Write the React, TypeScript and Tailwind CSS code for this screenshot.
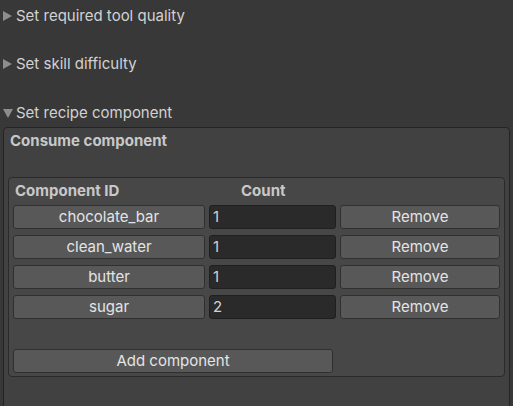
import React from 'react';

interface IComponentRow {
  id: string;
  count: number;
}

const rows: IComponentRow[] = [
  { id: 'chocolate_bar', count: 1 },
  { id: 'clean_water', count: 1 },
  { id: 'butter', count: 1 },
  { id: 'sugar', count: 2 },
];

const Foldout = ({ label, open }: { label: string; open?: boolean }) => (
  <div className="flex h-[20px] items-center">
    <div className="flex w-[16px] items-center pl-[3px]">
      {open ? (
        <svg width="10" height="9" viewBox="0 0 10 9">
          <path d="M0 0 L10 0 L5 9 Z" fill="#8c8c8c" />
        </svg>
      ) : (
        <svg width="9" height="10" viewBox="0 0 9 10">
          <path d="M0 0 L9 5 L0 10 Z" fill="#8c8c8c" />
        </svg>
      )}
    </div>
    <span className="text-[15px] text-[#d2d2d2]">{label}</span>
  </div>
);

const UnityButton = ({ label, className }: { label: string; className?: string }) => (
  <button
    className={
      'flex h-[24px] items-center justify-center rounded-[3px] border border-[#303030] bg-[#585858] pt-[1px] text-[15px] text-[#e4e4e4] ' +
      (className ?? '')
    }
  >
    {label}
  </button>
);

const App = () => {
  return (
    <div
      className="h-[406px] w-[513px] overflow-hidden bg-[#383838]"
      style={{ fontFamily: 'Inter, "Noto Sans", sans-serif' }}
    >
      <div className="flex flex-col pt-[6px]">
        <Foldout label="Set required tool quality" />
        <div className="h-[28px]" />
        <Foldout label="Set skill difficulty" />
        <div className="h-[29px]" />
        <Foldout label="Set recipe component" open />
      </div>

      <div className="mx-[3px] mt-[4px] h-[300px] rounded-[4px] border border-[#242424] bg-[#414141] px-[4px]">
        <div className="flex h-[26px] items-center pl-[2px] text-[15px] font-bold text-[#c8c8c8]">
          Consume component
        </div>
        <div className="h-[23px]" />

        <div className="rounded-[4px] border border-[#2a2a2a] bg-[#474747] px-[4px] pb-[3px] pt-[1px]">
          <div className="flex h-[24px] items-center text-[15px] font-bold text-[#c8c8c8]">
            <div className="w-[196px] pl-[2px]">Component ID</div>
            <div className="pl-[32px]">Count</div>
          </div>

          <div className="flex flex-col gap-[6px] pt-[2px]">
            {rows.map((row) => (
              <div key={row.id} className="flex gap-[4px]">
                <UnityButton label={row.id} className="w-[192px]" />
                <div className="flex h-[24px] w-[127px] items-center rounded-[3px] border border-[#1f1f1f] bg-[#2a2a2a] pl-[3px] text-[15px] text-[#d2d2d2]">
                  {row.count}
                </div>
                <UnityButton label="Remove" className="w-[160px]" />
              </div>
            ))}
          </div>

          <div className="h-[30px]" />
          <UnityButton label="Add component" className="w-[320px]" />
        </div>
      </div>
    </div>
  );
};

export default App;
